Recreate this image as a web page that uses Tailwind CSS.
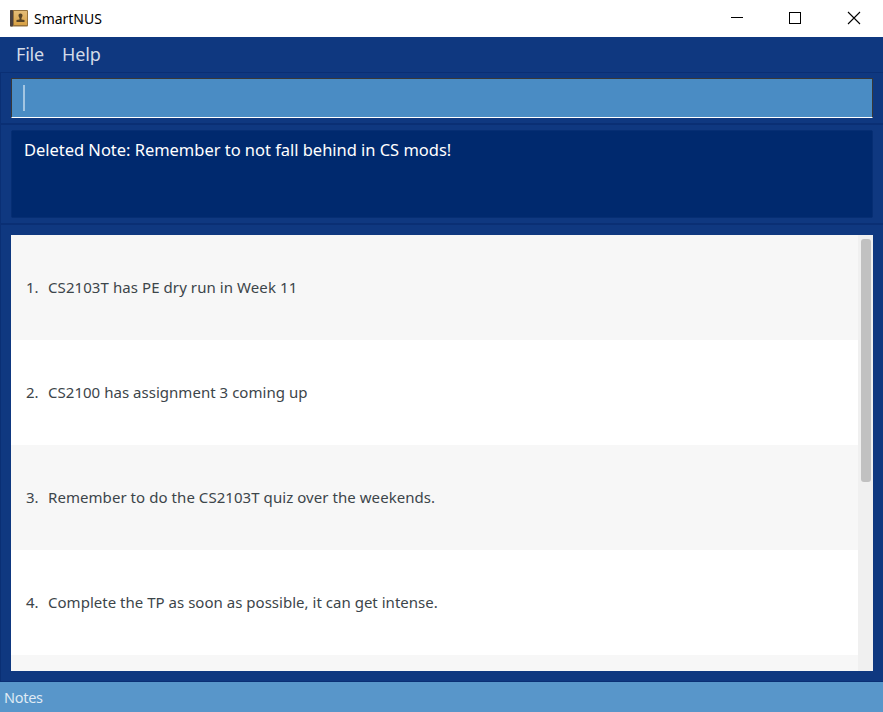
<!DOCTYPE html>
<html lang="en">
<head>
<meta charset="utf-8">
<title>SmartNUS</title>
<script src="https://cdn.jsdelivr.net/npm/@tailwindcss/browser@4"></script>
</head>
<body class="w-[883px] h-[712px] overflow-hidden bg-[#0f3880] font-['Noto_Sans','Open_Sans',sans-serif] flex flex-col whitespace-nowrap">
  <header class="h-[37px] shrink-0 bg-white flex items-center pb-px text-black">
    <svg class="ml-[10px] w-[18px] h-[18px]" viewBox="0 0 18 18">
      <defs><linearGradient id="g" x1="0" y1="0" x2="0" y2="1"><stop offset="0" stop-color="#e5bd78"/><stop offset="1" stop-color="#d9a144"/></linearGradient></defs>
      <rect x="0" y="1" width="18" height="16.500" rx="1" fill="#97733c"/>
      <rect x="4" y="2" width="13" height="14" fill="url(#g)"/>
      <rect x="0" y="1" width="3" height="16.500" rx="1" fill="#4b4140"/>
      <path d="M10.500 4.500c1.400 0 2 .900 2 2 0 1.100-.600 1.700-1 2.400v1.700l3 .400V13h-8v-2l3-.400V8.900c-.400-.700-1-1.300-1-2.400 0-1.100.600-2 2-2z" fill="#574326"/>
    </svg>
    <span class="ml-[6px] text-[14px] tracking-[-0.020px]">SmartNUS</span>
    <svg class="ml-auto mr-[22px] w-[131px] h-[14px]" viewBox="0 0 131 14" fill="none" stroke="#000">
      <path d="M1 6.500h12M59.500 1.500h11v11h-11z" shape-rendering="crispEdges"/>
      <path d="M118 1l12 12M130 1L118 13" stroke-width="1.100"/>
    </svg>
  </header>
  <nav class="h-[35px] shrink-0 pl-[16px] flex items-center gap-[18px] text-[18px] text-[#d3dbe8]">
    <span class="tracking-[-0.2px]">File</span><span class="tracking-[-0.1px]">Help</span>
  </nav>
  <main class="grow flex flex-col border-l border-[#0a2f74]">
    <section class="h-[53px] shrink-0 border-t border-b-2 border-[#0a2f74] pt-[5px] pl-[10px] pr-[10px]">
      <div class="h-[40px] bg-[#4a8cc4] border-t border-r border-l border-t-[#383838] border-r-[#383838] border-l-[#383838] border-b border-b-white pl-[11px] pt-[6px]">
        <div class="w-[2px] h-[26px] bg-[#a4c6e2]"></div>
      </div>
    </section>
    <section class="h-[100px] shrink-0 border-b-2 border-[#0a2f74] pt-[5px] px-[10px]">
      <div class="h-[88px] bg-[#00296e] border border-[#062e73] rounded-[2px] pl-[12px] pt-[7px] text-[16.500px] leading-[24px] text-white"><span class="tracking-[-0.030px]">Deleted Note: Remember to not fall behind in CS mods!</span></div>
    </section>
    <section class="grow border-b border-[#0a2f74] pt-[10px] px-[10px]">
      <div class="h-[436px] flex overflow-hidden bg-white text-[15px] text-[#3c454a]">
        <ol class="w-[847px]">
          <li class="h-[105px] bg-[#f7f7f7] flex items-center pl-[15px]"><span class="w-[22px]">1.</span><span class="tracking-[0.080px]">CS2103T has PE dry run in Week 11</span></li>
          <li class="h-[105px] flex items-center pl-[15px]"><span class="w-[22px]">2.</span><span class="tracking-[0.030px]">CS2100 has assignment 3 coming up</span></li>
          <li class="h-[105px] bg-[#f7f7f7] flex items-center pl-[15px]"><span class="w-[22px]">3.</span><span class="tracking-[0.060px]">Remember to do the CS2103T quiz over the weekends.</span></li>
          <li class="h-[105px] flex items-center pl-[15px]"><span class="w-[22px]">4.</span><span class="tracking-[0.020px]">Complete the TP as soon as possible, it can get intense.</span></li>
          <li class="h-[16px] bg-[#f7f7f7]"></li>
        </ol>
        <div class="w-[15px] bg-[#f0f0f0] pl-[3px] pt-[4px]"><div class="w-[10px] h-[243px] rounded-[3px] bg-[#c1c1c1]"></div></div>
      </div>
    </section>
  </main>
  <footer class="h-[30px] shrink-0 bg-[#5896ca] flex items-center pl-[4px] pt-[2px] text-[14.500px] text-[#dfeaf4]"><span class="tracking-[-0.3px]">Notes</span></footer>
</body>
</html>
